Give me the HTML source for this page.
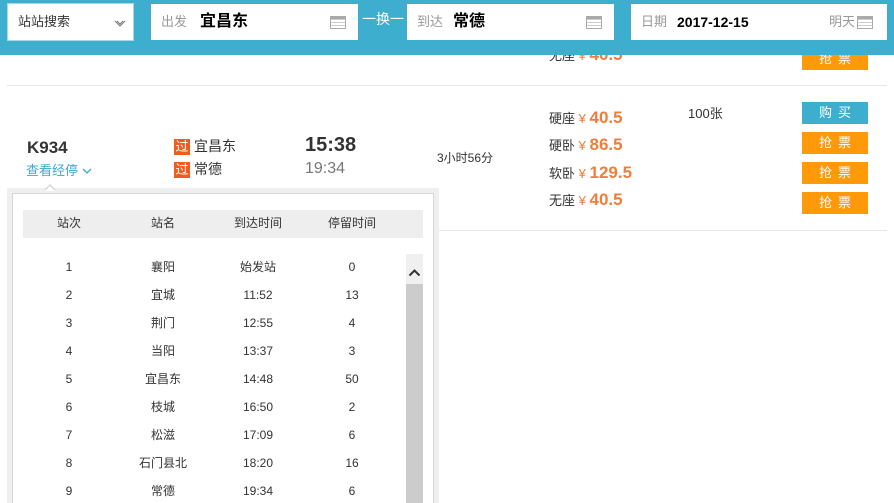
<!DOCTYPE html>
<html><head><meta charset="utf-8"><style>
*{margin:0;padding:0;box-sizing:border-box}
html,body{overflow:hidden}
body{width:894px;height:503px;background:#fff;font-family:"Liberation Sans","Noto Sans CJK SC",sans-serif;position:relative;color:#333;line-height:1.15}
.a{position:absolute;white-space:nowrap}
.top{position:absolute;left:0;top:0;width:894px;height:55px;background:#3eaecf}
.box{position:absolute;top:4px;height:36px;background:#fff}
.box .a{top:0;line-height:36px}
.lbl{color:#999;font-size:13px}
.cal{position:absolute;width:16px;height:13px;border:1px solid #aaa;top:12px;background:repeating-linear-gradient(#fff 0 2px,#ccc 2px 3px)}
.cal:before{content:"";position:absolute;left:-1px;right:-1px;top:-1px;height:3px;background:#aaa}
.btn{position:absolute;left:802px;width:66px;height:22px;color:#fff;font-size:13px;text-align:center;line-height:22px;letter-spacing:6px;text-indent:6px}
.o{background:#fe9a0a}.b{background:#3eaecf}
.p{color:#f07d3c;font-size:17px;font-weight:bold}
.y{color:#f07d3c;font-size:13px}
.s{font-size:13px;color:#333;line-height:20px}
.tag{display:inline-block;width:16px;height:16px;background:#f25b1f;color:#fff;font-size:13px;line-height:16px;text-align:center;margin-right:4px;vertical-align:middle}
.r{position:absolute;font-size:12px;color:#333;text-align:center;width:80px;line-height:16px}
</style></head><body>
<div class="a s" style="left:549px;top:45px">无座 <span class="y">¥</span> <span class="p">40.5</span></div>
<div class="btn o" style="top:48px">抢票</div>
<div class="top"></div>
<div class="box" style="left:7px;width:127px;border:1px solid #a8d8e6;top:3px;height:38px"><span class="a" style="left:10px;font-size:13px">站站搜索</span><svg class="a" style="left:106px;top:16px" width="12" height="8"><path d="M1 1l5 5 5-5M3 1l3 3 3-3" stroke="#777" fill="none"/></svg></div>
<div class="box" style="left:151px;width:207px"><span class="a lbl" style="left:10px">出发</span><span class="a" style="left:49px;font-size:16px;font-weight:bold;color:#000">宜昌东</span><div class="cal" style="left:179px"></div></div>
<div class="a" style="left:362px;top:9px;color:#fff;font-size:14px;line-height:20px">一换一</div>
<div class="box" style="left:407px;width:207px"><span class="a lbl" style="left:10px">到达</span><span class="a" style="left:46px;font-size:16px;font-weight:bold;color:#000">常德</span><div class="cal" style="left:179px"></div></div>
<div class="box" style="left:631px;width:256px"><span class="a lbl" style="left:10px">日期</span><span class="a" style="left:46px;font-size:14px;font-weight:bold;color:#000">2017-12-15</span><span class="a lbl" style="left:198px">明天</span><div class="cal" style="left:226px"></div></div>
<div class="a" style="left:7px;top:85px;width:880px;border-top:1px solid #e6e6e6"></div>
<div class="a" style="left:439px;top:230px;width:448px;border-top:1px solid #e6e6e6"></div>
<div class="a" style="left:27px;top:138px;font-size:17px;font-weight:bold;line-height:20px">K934</div>
<div class="a" style="left:26px;top:162px;font-size:13px;color:#3ea8c9;line-height:18px">查看经停 <svg width="10" height="7"><path d="M1 1l4 4 4-4" stroke="#3ea8c9" fill="none" stroke-width="1.3"/></svg></div>
<div class="a" style="left:174px;top:137px;font-size:14px;line-height:18px"><span class="tag">过</span>宜昌东</div>
<div class="a" style="left:174px;top:160px;font-size:14px;line-height:18px"><span class="tag">过</span>常德</div>
<div class="a" style="left:305px;top:134px;font-size:20px;font-weight:bold;line-height:22px">15:38</div>
<div class="a" style="left:305px;top:160px;font-size:16px;color:#777;line-height:18px">19:34</div>
<div class="a" style="left:437px;top:150px;font-size:12px;line-height:16px">3小时56分</div>
<div class="a s" style="left:549px;top:108px">硬座 <span class="y">¥</span> <span class="p">40.5</span></div>
<div class="a s" style="left:549px;top:135px">硬卧 <span class="y">¥</span> <span class="p">86.5</span></div>
<div class="a s" style="left:549px;top:163px">软卧 <span class="y">¥</span> <span class="p">129.5</span></div>
<div class="a s" style="left:549px;top:190px">无座 <span class="y">¥</span> <span class="p">40.5</span></div>
<div class="a" style="left:688px;top:105px;font-size:13px;line-height:18px">100张</div>
<div class="btn b" style="top:102px">购买</div>
<div class="btn o" style="top:132px">抢票</div>
<div class="btn o" style="top:162px">抢票</div>
<div class="btn o" style="top:192px">抢票</div>
<div class="a" style="left:7px;top:188px;width:432px;height:320px;background:#efefef"></div>
<div class="a" style="left:12px;top:193px;width:422px;height:320px;background:#fff;border:1px solid #d6d6d6"></div>
<div class="a" style="left:44px;top:184px;width:0;height:0;border-left:6px solid transparent;border-right:6px solid transparent;border-bottom:6px solid #d6d6d6"></div>
<div class="a" style="left:45px;top:186px;width:0;height:0;border-left:5px solid transparent;border-right:5px solid transparent;border-bottom:5px solid #fff"></div>
<div class="a" style="left:23px;top:210px;width:400px;height:28px;background:#eee"></div>
<div class="r" style="left:29px;top:215px">站次</div>
<div class="r" style="left:123px;top:215px">站名</div>
<div class="r" style="left:218px;top:215px">到达时间</div>
<div class="r" style="left:312px;top:215px">停留时间</div>
<div class="a" style="left:406px;top:254px;width:17px;height:260px;background:#ccc"></div>
<div class="a" style="left:406px;top:254px;width:17px;height:30px;background:#f0f0f0"></div>
<svg class="a" style="left:408px;top:268px" width="13" height="9"><path d="M1.5 7.5l5-5 5 5" stroke="#333" stroke-width="2" fill="none"/></svg>
<div class="r" style="left:29px;top:259px">1</div><div class="r" style="left:123px;top:259px">襄阳</div><div class="r" style="left:218px;top:259px">始发站</div><div class="r" style="left:312px;top:259px">0</div>
<div class="r" style="left:29px;top:287px">2</div><div class="r" style="left:123px;top:287px">宜城</div><div class="r" style="left:218px;top:287px">11:52</div><div class="r" style="left:312px;top:287px">13</div>
<div class="r" style="left:29px;top:315px">3</div><div class="r" style="left:123px;top:315px">荆门</div><div class="r" style="left:218px;top:315px">12:55</div><div class="r" style="left:312px;top:315px">4</div>
<div class="r" style="left:29px;top:343px">4</div><div class="r" style="left:123px;top:343px">当阳</div><div class="r" style="left:218px;top:343px">13:37</div><div class="r" style="left:312px;top:343px">3</div>
<div class="r" style="left:29px;top:371px">5</div><div class="r" style="left:123px;top:371px">宜昌东</div><div class="r" style="left:218px;top:371px">14:48</div><div class="r" style="left:312px;top:371px">50</div>
<div class="r" style="left:29px;top:399px">6</div><div class="r" style="left:123px;top:399px">枝城</div><div class="r" style="left:218px;top:399px">16:50</div><div class="r" style="left:312px;top:399px">2</div>
<div class="r" style="left:29px;top:427px">7</div><div class="r" style="left:123px;top:427px">松滋</div><div class="r" style="left:218px;top:427px">17:09</div><div class="r" style="left:312px;top:427px">6</div>
<div class="r" style="left:29px;top:455px">8</div><div class="r" style="left:123px;top:455px">石门县北</div><div class="r" style="left:218px;top:455px">18:20</div><div class="r" style="left:312px;top:455px">16</div>
<div class="r" style="left:29px;top:483px">9</div><div class="r" style="left:123px;top:483px">常德</div><div class="r" style="left:218px;top:483px">19:34</div><div class="r" style="left:312px;top:483px">6</div>
</body></html>
